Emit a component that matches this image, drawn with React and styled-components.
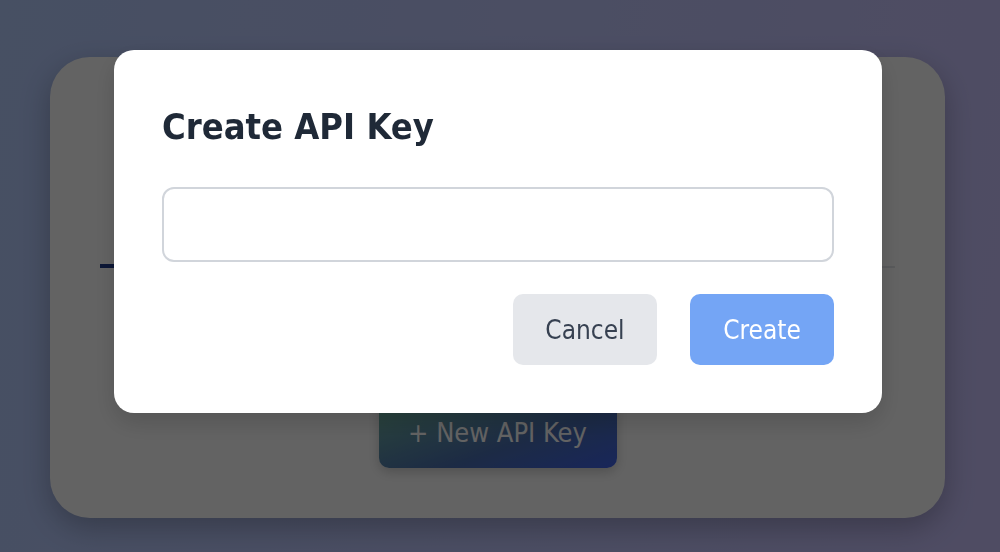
import React, { useState } from "react";
import styled, { createGlobalStyle } from "styled-components";

const GlobalStyle = createGlobalStyle`
  html, body {
    margin: 0;
    padding: 0;
  }
  body {
    font-family: "DejaVu Sans Condensed", "DejaVu Sans", sans-serif;
  }
  * {
    box-sizing: border-box;
  }
`;

const Page = styled.div`
  min-height: 100vh;
  padding: 57px 55px 34px 50px;
  background: linear-gradient(100deg, #b6cdff 0%, #c2c8ff 55%, #ccc4ff 100%);
`;

const Card = styled.div`
  background: #ffffff;
  border-radius: 40px;
  padding: 171px 50px 50px;
  box-shadow: 0 10px 30px rgba(0, 0, 0, 0.25);
  display: flex;
  flex-direction: column;
  align-items: center;
`;

const Tabs = styled.div`
  align-self: stretch;
  display: flex;
  margin-bottom: 128px;
  border-bottom: 2px solid #e5e7eb;
`;

const Tab = styled.button`
  border: none;
  background: none;
  font-family: inherit;
  font-size: 22px;
  line-height: 26px;
  padding: 0 20px 10px;
  margin-bottom: -2px;
  color: ${(p) => (p.active ? "#1e3a8a" : "#6b7280")};
  border-bottom: 4px solid ${(p) => (p.active ? "#1e3a8a" : "transparent")};
`;

const NewKeyButton = styled.button`
  width: 238px;
  height: 72px;
  border: none;
  border-radius: 10px;
  font-family: inherit;
  font-size: 27px;
  color: #ffffff;
  background: linear-gradient(160deg, #72b898 0%, #4a6fb0 60%, #3f62e8 100%);
  box-shadow: 0 4px 12px rgba(0, 0, 0, 0.2);
`;

const Overlay = styled.div`
  position: fixed;
  inset: 0;
  background: rgba(0, 0, 0, 0.61);
  display: flex;
  align-items: flex-start;
  padding: 50px 0 0 114px;
`;

const Modal = styled.div`
  width: 768px;
  background: #ffffff;
  border-radius: 20px;
  padding: 55px 48px 48px;
  box-shadow: 0 10px 25px rgba(0, 0, 0, 0.15);
`;

const Title = styled.h2`
  margin: 0 0 39px;
  font-size: 36px;
  line-height: 43px;
  font-weight: 700;
  color: #1f2937;
`;

const Input = styled.input`
  display: block;
  width: 100%;
  height: 75px;
  border: 2px solid #d1d5db;
  border-radius: 12px;
  padding: 0 20px;
  font-family: inherit;
  font-size: 24px;
  outline: none;
`;

const Actions = styled.div`
  display: flex;
  justify-content: flex-end;
  gap: 33px;
  margin-top: 32px;
`;

const ActionButton = styled.button`
  width: 144px;
  height: 71px;
  border: none;
  border-radius: 10px;
  font-family: inherit;
  font-size: 26px;
  color: ${(p) => (p.primary ? "#ffffff" : "#374151")};
  background: ${(p) => (p.primary ? "#74a5f5" : "#e5e7eb")};
`;

export default function App() {
  const [name, setName] = useState("");

  return (
    <>
      <GlobalStyle />
      <Page>
        <Card>
          <Tabs>
            <Tab active>Active</Tab>
            <Tab>Revoked</Tab>
          </Tabs>
          <NewKeyButton>+ New API Key</NewKeyButton>
        </Card>
      </Page>
      <Overlay>
        <Modal>
          <Title>Create API Key</Title>
          <Input value={name} onChange={(e) => setName(e.target.value)} />
          <Actions>
            <ActionButton>Cancel</ActionButton>
            <ActionButton primary disabled={!name}>
              Create
            </ActionButton>
          </Actions>
        </Modal>
      </Overlay>
    </>
  );
}
